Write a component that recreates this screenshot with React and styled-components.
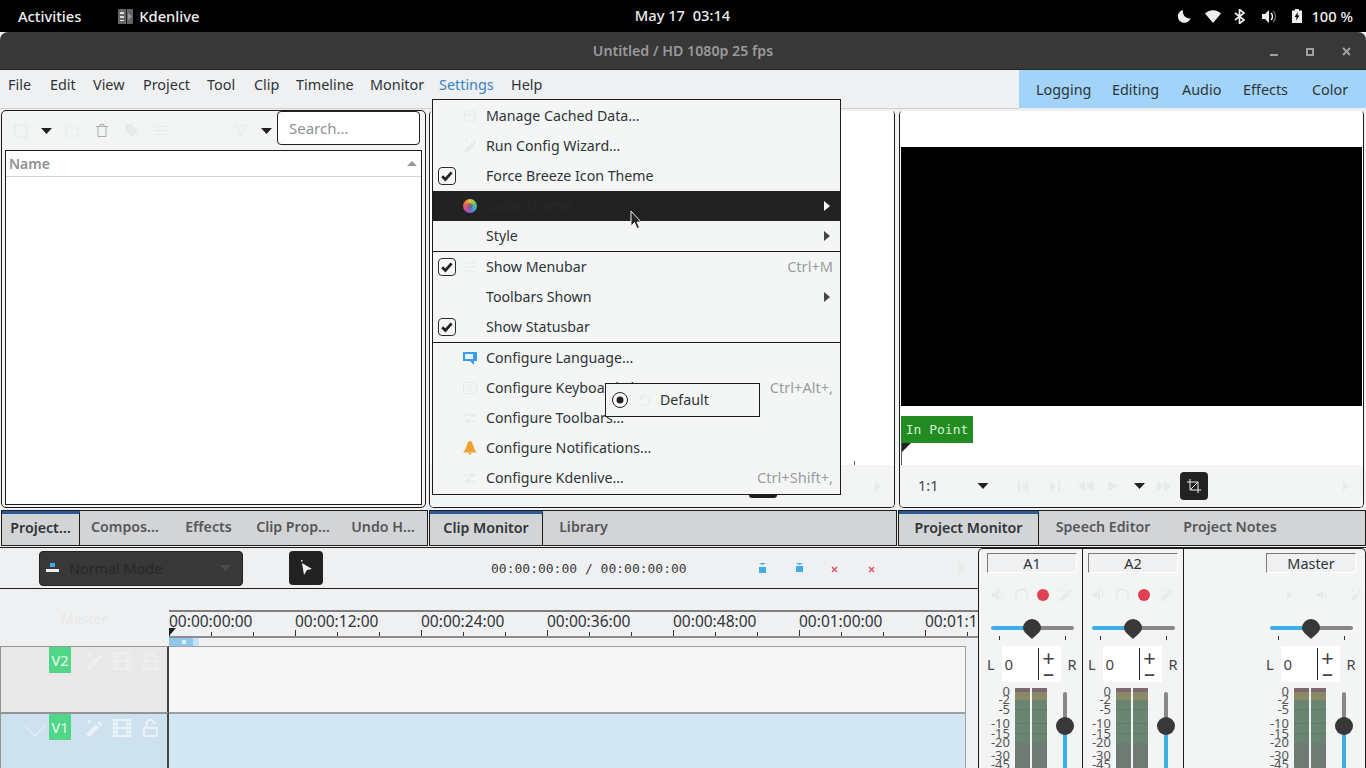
import React from "react";
import styled, { createGlobalStyle } from "styled-components";

const Global = createGlobalStyle`
  html, body { margin: 0; padding: 0; background: #eff0f1; }
  #root { width: 1366px; height: 768px; overflow: hidden; position: relative; font-family: "Noto Sans", "Open Sans", sans-serif; font-size: 14px; color: #2e3436; }
  * { box-sizing: border-box; }
`;

const Page = styled.div`display:flex;flex-direction:column;width:1366px;height:768px;position:relative;overflow:hidden;background:#eff0f1;`;

/* GNOME bar */
const TopBar = styled.div`height:32px;background:#000;color:#eee;display:flex;align-items:center;padding:0 13px 0 18px;font-size:14.7px;font-weight:500;position:relative;flex:none;`;
const TopApp = styled.div`display:flex;align-items:center;gap:6px;margin-left:37px;`;
const Clock = styled.div`position:absolute;left:0;right:0;top:0;height:32px;line-height:31px;text-align:center;padding-right:1px;`;
const Tray = styled.div`margin-left:auto;display:flex;align-items:center;`;
const TitleBar = styled.div`height:38px;background:#383838;border-radius:8px 8px 0 0;border-bottom:1px solid #242424;color:#9a9a9a;font-size:14.2px;font-weight:600;display:flex;align-items:center;justify-content:center;position:relative;flex:none;`;
const WinBtns = styled.div`position:absolute;right:15px;top:15px;display:flex;gap:28px;align-items:center;`;

/* Menu */
const MenuRow = styled.div`height:39px;display:flex;flex:none;`;
const MenuBar = styled.div`flex:1;border-bottom:1px solid #d0d1d2;display:flex;align-items:center;padding:0 0 10px 8px;height:39px;font-size:14.4px;`;
const MenuName = styled.span`width:${p => p.$w}px;flex:none;color:${p => p.$on ? "#3584c4" : "#2e3436"};`;
const Layouts = styled.div`width:347px;height:38px;background:#a2d4fa;display:flex;align-items:center;padding-left:17px;font-size:14.4px;`;
const LayoutName = styled.span`width:${p => p.$w}px;flex:none;`;

/* Docks */
const Upper = styled.div`height:437px;display:flex;flex:none;`;
const Dock = styled.div`width:${p => p.$w}px;display:flex;flex-direction:column;padding-left:${p => p.$pl || 0}px;`;
const Panel = styled.div`flex:1;margin:1px 2px 2px ${p => p.$ml || 0}px;border:1px solid #1c1c1c;border-top-color:${p => p.$top || "#1c1c1c"};border-radius:5px;background:${p => p.$bg || "#f3f5f5"};overflow:hidden;display:flex;flex-direction:column;min-height:0;`;
const TabBar = styled.div`height:36px;flex:none;background:#d3d4d6;border:1px solid #1c1c1c;display:flex;`;
const Tab = styled.div`width:${p => p.$w}px;flex:none;display:flex;align-items:center;justify-content:center;font-size:14.2px;font-weight:600;color:${p => p.$on ? "#2e3436" : "#555759"};white-space:nowrap;padding-bottom:${p => p.$on ? 5 : 3}px;${p => p.$on ? "border-top:3px solid #2a5a96;border-right:1px solid #1c1c1c;" : ""}`;

const BinTools = styled.div`height:39px;display:flex;align-items:center;padding:0 5px 0 12px;flex:none;`;
const Search = styled.div`width:143px;height:34px;margin:-6px 0 0 auto;border:1px solid #222;border-radius:4px;background:#fff;color:#8e9192;padding-left:11px;display:flex;align-items:center;font-size:15px;`;
const NameList = styled.div`flex:1;margin:0 3px 2px 3px;background:#fff;border:1px solid #1c1c1c;`;
const ListHead = styled.div`height:26px;border-bottom:1px solid #d4d4d4;display:flex;align-items:center;justify-content:space-between;padding:0 4px 0 3px;color:#8f9192;font-weight:600;`;
const Spacer = styled.div`width:${p => p.$w}px;flex:none;`;

const MonArea = styled.div`flex:1;background:#fff;display:flex;flex-direction:column;padding:36px 1px 0 1px;min-height:0;position:relative;`;
const Video = styled.div`height:259px;background:#000;flex:none;`;
const InPoint = styled.div`width:72px;height:27px;margin-top:10px;background:#228b22;color:#d8f3d8;font-family:"DejaVu Sans Mono",monospace;font-size:13px;display:flex;align-items:center;justify-content:center;flex:none;`;
const Marker = styled.svg`display:block;flex:none;`;
const MonBar = styled.div`height:42px;flex:none;display:flex;align-items:center;background:#f3f5f5;padding-left:18px;position:relative;`;
const Zoom = styled.span`width:59px;font-size:14.5px;color:#444;margin-top:-2px;`;
const Crop = styled.div`width:28px;height:28px;border-radius:4px;background:#222;display:flex;align-items:center;justify-content:center;margin-left:9px;`;
const FarArrow = styled.div`margin-left:auto;padding-right:14px;display:flex;`;
const ClipArea = styled.div`flex:1;background:#fff;display:flex;justify-content:flex-end;align-items:flex-end;padding-right:39px;`;
const ClipTick = styled.div`width:1px;height:4px;background:#666;`;
const ClipBar = styled.div`height:42px;background:#f3f5f5;flex:none;display:flex;align-items:center;justify-content:flex-end;padding-right:13px;`;

/* Lower */
const Lower = styled.div`flex:1;display:flex;min-height:0;border-top:1px solid #1c1c1c;margin-top:1px;`;
const TimelinePane = styled.div`width:978px;flex:none;display:flex;flex-direction:column;`;
const TlTools = styled.div`height:41px;flex:none;border-bottom:1px solid #1c1c1c;display:flex;align-items:center;padding-left:39px;position:relative;`;
const ModeBox = styled.div`width:204px;height:35px;flex:none;border-radius:4px;background:#383838;border:1px solid #222;display:flex;align-items:center;padding:0 11px 0 6px;color:#26282a;font-size:14.4px;gap:10px;`;
const ToolBtn = styled.div`width:34px;height:34px;flex:none;border-radius:4px;background:#222;margin-left:46px;display:flex;align-items:center;justify-content:center;`;
const Time = styled.div`margin-left:46px;padding-left:122px;flex:none;font-family:"DejaVu Sans Mono",monospace;font-size:13px;color:#3a3c3e;white-space:pre;`;
const TlIcons = styled.div`margin-left:72px;display:flex;align-items:center;gap:30px;flex:none;`;
const TlIcon = styled.svg`display:block;${p => p.$cross ? "margin-top:3px;" : ""}${p => p.$pull ? "margin-left:-2px;" : ""}`;
const RulerRow = styled.div`height:57px;flex:none;display:flex;`;
const MasterCol = styled.div`width:169px;flex:none;color:#e6e8e9;text-align:center;padding:20px 1px 0 0;`;
const Ruler = styled.div`flex:1;margin-top:21px;height:28px;border-top:2px solid #7f7f7f;border-bottom:2px solid #8d8d8d;display:flex;overflow:hidden;`;
const RulerCell = styled.div`width:126px;flex:none;font-size:15.5px;color:#2f3438;line-height:19px;white-space:nowrap;height:24px;background:
  linear-gradient(#333,#333) 0 18px/1px 6px no-repeat,
  linear-gradient(#333,#333) 42px 20px/1px 4px no-repeat,
  linear-gradient(#333,#333) 84px 20px/1px 4px no-repeat;`;
const Overlay = styled.svg`position:absolute;left:169px;display:block;`;
const Track = styled.div`height:${p => p.$h}px;flex:none;display:flex;`;
const TrackHead = styled.div`width:169px;flex:none;background:${p => p.$bg};border:1px solid #959595;border-right:2px solid #444;display:flex;align-items:flex-start;padding-left:24px;`;
const TrackTag = styled.div`width:22px;height:26px;margin-left:3px;background:#4fd687;color:#eefbf3;display:flex;align-items:center;justify-content:center;font-size:14.5px;`;
const TrackIcons = styled.div`display:flex;gap:10px;margin-left:14px;padding-top:5px;`;
const LockSlot = styled.div`margin-left:2px;`;
const TrackBody = styled.div`width:797px;flex:none;background:${p => p.$bg};border:1px solid #a0a0a0;border-left:0;`;
const ChevWrap = styled.div`padding-top:8px;width:21px;flex:none;`;

/* Mixer */
const Mixer = styled.div`flex:1;border:1px solid #1c1c1c;border-bottom:0;border-radius:5px 5px 0 0;background:#f3f5f5;display:flex;padding:0 3px;overflow:hidden;`;
const Strip = styled.div`width:101px;flex:none;padding-left:5px;${p => p.$line ? "border-right:1px solid #1c1c1c;" : ""}${p => p.$end ? "margin-left:auto;" : ""}display:flex;flex-direction:column;`;
const StripName = styled.div`width:90px;height:20px;margin-top:4px;background:#eff0f1;border:1px solid #fff;border-top-color:#777;border-left-color:#777;display:flex;align-items:center;justify-content:center;font-size:14.4px;color:#2e3436;flex:none;`;
const StripIcons = styled.div`height:26px;margin-top:9px;display:flex;align-items:center;flex:none;`;
const Pan = styled.div`position:relative;height:24px;margin-top:11px;margin-left:4px;width:83px;flex:none;`;
const PanLine = styled.div`position:absolute;top:7px;left:0;right:0;height:4px;border-radius:2px;background:linear-gradient(90deg,#3daee9 50%,#888 50%);`;
const PanKnob = styled.svg`position:absolute;left:32px;top:0;`;
const PanTick = styled.div`position:absolute;top:17px;left:${p => p.$x}px;width:1px;height:4px;background:#333;`;
const Balance = styled.div`height:36px;flex:none;margin-top:3px;display:flex;align-items:center;font-size:14.5px;color:#444;`;
const BalBox = styled.div`width:59px;height:36px;background:#fff;margin:0 7px 0 7px;display:flex;align-items:center;padding-left:3px;font-size:15px;position:relative;`;
const BalDiv = styled.div`position:absolute;left:36px;top:2px;bottom:2px;width:1px;background:#222;`;
const BalSign = styled.div`position:absolute;left:35px;width:24px;text-align:center;top:${p => p.$t}px;font-size:22px;line-height:18px;color:#444;`;
const MeterRow = styled.div`flex:1;display:flex;margin-top:6px;position:relative;min-height:80px;`;
const Scale = styled.div`width:23px;flex:none;position:relative;`;
const ScaleNum = styled.div`position:absolute;right:0;top:${p => p.$t}px;font-size:13px;line-height:13px;color:#555;`;
const Bar = styled.div`width:15px;margin-left:${p => p.$ml}px;flex:none;background:linear-gradient(#7d6a70 0 4px,#8a8a68 4px 12px,#6b8573 12px 21px,#5f7a68 21px 22px,#6b8573 22px 35px,#5f7a68 35px 36px,#6b8573 36px 45px,#5f7a68 45px 46px,#6b8573 46px 55px,#6f7a75 55px);`;
const Fader = styled.div`position:relative;width:18px;margin-left:9px;flex:none;`;
const FaderLine = styled.div`position:absolute;left:7px;width:4px;top:4px;bottom:0;background:linear-gradient(#888 0 38px,#3daee9 38px);border-radius:2px 2px 0 0;`;
const FaderKnob = styled.div`position:absolute;left:0;top:29px;width:18px;height:18px;border-radius:50%;background:#383838;`;

/* Popup */
const Popup = styled.div`position:absolute;left:432px;top:99px;width:409px;height:396px;background:#f4f6f6;border:1px solid #1c1c1c;padding:1px 0;display:flex;flex-direction:column;z-index:5;`;
const Item = styled.div`height:30px;flex:none;display:flex;align-items:center;padding:0 7px 0 0;background:${p => p.$hot ? "#222" : "transparent"};color:${p => p.$hot ? "#26282b" : "#2e3436"};`;
const CheckCol = styled.div`width:28px;flex:none;padding-left:5px;display:flex;align-items:center;`;
const IconCol = styled.div`width:25px;flex:none;display:flex;justify-content:center;padding-right:7px;`;
const ItemText = styled.span`flex:1;white-space:nowrap;font-size:14.2px;margin-top:-2px;`;
const Short = styled.span`color:#9b9d9e;white-space:nowrap;font-size:14.6px;margin-top:-2px;`;
const Sep = styled.div`height:1px;background:#1c1c1c;flex:none;`;
const SubMenu = styled.div`position:absolute;left:605px;top:383px;width:155px;height:34px;background:#f4f6f6;border:1px solid #1c1c1c;display:flex;align-items:center;padding-left:5px;z-index:6;font-size:14.2px;`;
const SubLabel = styled.span`margin-top:-2px;`;
const Pointer = styled.svg`position:absolute;left:630px;top:210px;z-index:7;`;
const Nub = styled.div`position:absolute;left:749px;top:495px;width:28px;height:3px;background:#1e1e1e;border-radius:0 0 4px 4px;`;
const ColorWheel = styled.div`width:14px;height:14px;border-radius:50%;background:radial-gradient(circle,#7a6a80 0 2.5px,transparent 3px),conic-gradient(#e8c040,#70c060,#40a8d0,#8060c8,#e04890,#e8703a,#e8c040);`;
const ModeCaret = styled.span`margin-left:auto;`;

const F = "#e8eaea";
const Caret = ({ c = "#222", w = 11 }) => <svg width={w} height="6" viewBox="0 0 11 6" style={{ display: "block" }}><path d="M0 0h11L5.500 6z" fill={c} /></svg>;
const Right = ({ c = "#444" }) => <svg width="6" height="10" viewBox="0 0 6 10"><path d="M0 0l6 5-6 5z" fill={c} /></svg>;
const Check = () => <svg width="18" height="18" viewBox="0 0 18 18"><rect x=".5" y=".5" width="17" height="17" rx="3.500" fill="#f6f7f7" stroke="#2a2a2a" /><path d="M4.200 9.200l3.200 3.200 6.200-7" fill="none" stroke="#222" strokeWidth="2.800" /></svg>;
const Db = () => <svg width="14" height="14" viewBox="0 0 14 14" fill="none" stroke={F}><rect x="1.500" y="1.500" width="11" height="11" rx="3" /><path d="M1.500 6h11" /></svg>;
const Wand = ({ c = F, s = 14 }) => <svg width={s} height={s} viewBox="0 0 14 14"><path d="M1 11.500L8.500 4l2.500 2.500L3.500 14z M9.500 3l1.500-1.500L13.500 4 12 5.500z M3.500 0l.6 1.400L5.500 2l-1.400.6L3.500 4l-.6-1.400L1.500 2l1.400-.6z" fill={c} /></svg>;
const Sliders = () => <svg width="14" height="14" viewBox="0 0 14 14" stroke={F} fill="none"><path d="M1 4h12M1 10h12" /><circle cx="9" cy="4" r="1.500" /><circle cx="5" cy="10" r="1.500" /></svg>;
const Bars = () => <svg width="14" height="14" viewBox="0 0 14 14" stroke={F}><path d="M1 2l2 2 3-3M1 7h12M1 11h12M7 3h6" fill="none" /></svg>;
const Keys = () => <svg width="14" height="12" viewBox="0 0 14 12"><rect x=".5" y=".5" width="13" height="11" rx="1" fill="none" stroke={F} /><path d="M2 3h10M2 6h10M4 9h6" stroke={F} strokeDasharray="1 1" /></svg>;
const Speech = () => <svg width="14" height="13" viewBox="0 0 14 13"><path d="M0 0h14v9h-3v4l-4-4H0z" fill="#3a9cf0" /><rect x="2" y="2" width="8" height="5" fill="#e8f4fd" /></svg>;
const Bell = () => <svg width="14" height="14" viewBox="0 0 14 14"><path d="M7 0c1 0 2 .7 2.200 2C11 4 10.500 9 14 11.500H0C3.500 9 3 4 4.800 2 5 .7 6 0 7 0z" fill="#f0a030" /><path d="M5.500 12h3L7 14z" fill="#c88a3a" /></svg>;
const Film = ({ c = F }) => <svg width="18" height="18" viewBox="0 0 18 18"><path fillRule="evenodd" fill={c} d="M0 0h18v18H0z M1.500 2v2h2V2z M1.500 6v2h2V6z M1.500 10v2h2v-2z M1.500 14v2h2v-2z M14.500 2v2h2V2z M14.500 6v2h2V6z M14.500 10v2h2v-2z M14.500 14v2h2v-2z M5 2v6h8V2z M5 10v6h8v-6z" /></svg>;
const Lock = ({ c = F }) => <svg width="15" height="18" viewBox="0 0 15 18" fill="none" stroke={c} strokeWidth="1.800"><rect x="1" y="9" width="13" height="8" /><path d="M3.500 9V5a4 4 0 0 1 8 0" /></svg>;
const Chev = ({ c = F }) => <svg width="20" height="11" viewBox="0 0 20 11" fill="none" stroke={c}><path d="M0 0l10 10L20 0" /></svg>;
const Spk = ({ c = F }) => <svg width="12" height="12" viewBox="0 0 12 12"><path d="M0 4h3l4-4v12l-4-4H0z M9 2c2 2 2 6 0 8" fill={c} /></svg>;
const Phones = () => <svg width="13" height="12" viewBox="0 0 13 12" fill="none" stroke={F} strokeWidth="1.500"><path d="M1 11V6a5.500 5.500 0 0 1 11 0v5" /></svg>;
const Dot = () => <svg width="12" height="12" viewBox="0 0 12 12"><circle cx="6" cy="6" r="6" fill="#e04050" /></svg>;
const Cross = ({ pull }) => <TlIcon $cross $pull={pull} width="7" height="7" viewBox="0 0 7 7" stroke="#e05060" strokeWidth="1.400"><path d="M1 1l5 5M6 1l-5 5" /></TlIcon>;

const MENUS = [["File", 42], ["Edit", 43], ["View", 50], ["Project", 64], ["Tool", 47], ["Clip", 42], ["Timeline", 74], ["Monitor", 69], ["Settings", 72], ["Help", 40]];
const LAYOUTS = [["Logging", 76], ["Editing", 70], ["Audio", 61], ["Effects", 69], ["Color", 40]];
const RULER = ["00:00:00:00", "00:00:12:00", "00:00:24:00", "00:00:36:00", "00:00:48:00", "00:01:00:00", "00:01:12:00"];
const SCALE = [["0", -3], ["-2", 5], ["-5", 15], ["-10", 29], ["-15", 39], ["-20", 48], ["-30", 61], ["-45", 70]];

const MixStrip = ({ name, line, end, master }) => (
  <Strip $line={line} $end={end}>
    <StripName>{name}</StripName>
    <StripIcons>
      {master ? <>
        <Spacer $w={21} /><Right c={F} /><Spacer $w={25} /><Spk /><Spacer $w={22} /><Wand />
      </> : <>
        <Spacer $w={5} /><Spk /><Spacer $w={11} /><Phones /><Spacer $w={9} /><Dot /><Spacer $w={9} /><Wand />
      </>}
    </StripIcons>
    <Pan>
      <PanLine />
      <PanKnob width="18" height="20" viewBox="0 0 18 20"><path d="M9 0a9 9 0 0 1 9 9c0 4-5 7-9 11C5 16 0 13 0 9a9 9 0 0 1 9-9z" fill="#383838" /></PanKnob>
      <PanTick $x={8} /><PanTick $x={74} />
    </Pan>
    <Balance>
      <span>L</span>
      <BalBox>0<BalDiv /><BalSign $t={2}>+</BalSign><BalSign $t={17}>–</BalSign></BalBox>
      <span>R</span>
    </Balance>
    <MeterRow>
      <Scale>{SCALE.map(([t, y]) => <ScaleNum key={t} $t={y}>{t}</ScaleNum>)}</Scale>
      <Bar $ml={5} /><Bar $ml={2} />
      <Fader><FaderLine /><FaderKnob /></Fader>
    </MeterRow>
  </Strip>
);

const MenuItem = ({ check, icon, text, short, sub, hot }) => (
  <Item $hot={hot}>
    <CheckCol>{check && <Check />}</CheckCol>
    <IconCol>{icon}</IconCol>
    <ItemText>{text}</ItemText>
    {short && <Short>{short}</Short>}
    {sub && <Right c={hot ? "#fff" : "#444"} />}
    {sub && <Spacer $w={3} />}
  </Item>
);

export default function App() {
  return (
    <Page>
      <Global />
      <TopBar>
        <span>Activities</span>
        <TopApp>
          <svg width="15" height="15" viewBox="0 0 15 15"><rect width="15" height="15" rx="1" fill="#666" /><path d="M2 3h4v2H2zM2 7h4v2H2zM2 11h4v1H2z" fill="#ddd" /><path d="M8 0h1v15H8z" fill="#222" /><path d="M10 4l4 3.500-4 3.500z" fill="#999" /></svg>
          <span>Kdenlive</span>
        </TopApp>
        <Clock>May 17&nbsp;&nbsp;03:14</Clock>
        <Tray>
          <svg width="13" height="14" viewBox="0 0 13 14"><path d="M5 1a6.500 6.500 0 1 0 7.500 8.500A7 7 0 0 1 5 1z" fill="#eee" /></svg>
          <Spacer $w={14} />
          <svg width="16" height="13" viewBox="0 0 16 13"><path d="M0 3.500C4.500-1 11.500-1 16 3.500L8 13z" fill="#eee" /></svg>
          <Spacer $w={13} />
          <svg width="12" height="15" viewBox="0 0 12 15" fill="none" stroke="#eee" strokeWidth="1.700"><path d="M1 4l9 7-4.500 3.500v-14L10 4l-9 7" /></svg>
          <Spacer $w={16} />
          <svg width="15" height="13" viewBox="0 0 15 13"><path d="M0 4h3l4-4v13l-4-4H0z" fill="#eee" /><path d="M9 3c2 2 2 5 0 7" fill="none" stroke="#eee" strokeWidth="1.500" /><path d="M11 1c3.500 3 3.500 8 0 11" fill="none" stroke="#777" strokeWidth="1.200" /></svg>
          <Spacer $w={15} />
          <svg width="10" height="14" viewBox="0 0 10 14"><path d="M3 0h4v1.500h3V14H0V1.500h3z" fill="#eee" /><path d="M6 3L2.500 8h2L4 11.500 7.500 6.500h-2z" fill="#000" /></svg>
          <Spacer $w={9} />
          <span>100 %</span>
        </Tray>
      </TopBar>
      <TitleBar>
        Untitled / HD 1080p 25 fps
        <WinBtns>
          <svg width="8" height="8" viewBox="0 0 8 8"><path d="M0 6h8v2H0z" fill="#a0a0a0" /></svg>
          <svg width="8" height="8" viewBox="0 0 8 8" fill="none" stroke="#a0a0a0" strokeWidth="2"><rect x="1" y="1" width="6" height="6" /></svg>
          <svg width="9" height="9" viewBox="0 0 9 9" stroke="#a0a0a0" strokeWidth="2"><path d="M1 1l7 7M8 1l-7 7" /></svg>
        </WinBtns>
      </TitleBar>
      <MenuRow>
        <MenuBar>
          {MENUS.map(([m, w]) => <MenuName key={m} $w={w} $on={m === "Settings"}>{m}</MenuName>)}
        </MenuBar>
        <Layouts>
          {LAYOUTS.map(([m, w]) => <LayoutName key={m} $w={w}>{m}</LayoutName>)}
        </Layouts>
      </MenuRow>
      <Upper>
        <Dock $w={428} $pl={1}>
          <Panel>
            <BinTools>
              <svg width="14" height="14" viewBox="0 0 14 14" fill="none" stroke={F}><rect x="1" y="1" width="12" height="12" /></svg>
              <Spacer $w={13} /><Caret /><Spacer $w={13} />
              <svg width="14" height="14" viewBox="0 0 14 14" fill="none" stroke={F}><path d="M1 12V2h5l1 2h6v8z" /></svg>
              <Spacer $w={17} />
              <svg width="12" height="13" viewBox="0 0 12 13" fill="none" stroke="#aaa"><path d="M0 2.500h12M2 2.500v10h8v-10M4 2.500V.5h4v2" /></svg>
              <Spacer $w={17} />
              <svg width="13" height="13" viewBox="0 0 13 13"><path d="M0 0h6l7 7-6 6-7-7z" fill={F} /></svg>
              <Spacer $w={17} />
              <svg width="12" height="11" viewBox="0 0 12 11" stroke={F}><path d="M0 1.500h12M0 5.500h12M0 9.500h12" /></svg>
              <Spacer $w={68} />
              <svg width="12" height="12" viewBox="0 0 12 12" fill="none" stroke={F}><path d="M0 0h12L7 7v5H5V7z" /></svg>
              <Spacer $w={14} /><Caret />
              <Search>Search…</Search>
            </BinTools>
            <NameList>
              <ListHead>Name<svg width="10" height="5" viewBox="0 0 10 5"><path d="M0 5h10L5 0z" fill="#999" /></svg></ListHead>
            </NameList>
          </Panel>
          <TabBar>
            <Tab $w={78} $on>Project…</Tab><Tab $w={90}>Compos…</Tab><Tab $w={77}>Effects</Tab><Tab $w={92}>Clip Prop…</Tab><Tab $w={88}>Undo H…</Tab>
          </TabBar>
        </Dock>
        <Dock $w={469} $pl={1}>
          <Panel $bg="#fff" $top="#f0f0f0">
            <ClipArea><ClipTick /></ClipArea>
            <ClipBar><Right c={F} /></ClipBar>
          </Panel>
          <TabBar>
            <Tab $w={113} $on>Clip Monitor</Tab><Tab $w={81}>Library</Tab>
          </TabBar>
        </Dock>
        <Dock $w={469} $pl={1}>
          <Panel $ml={1} $top="#f0f0f0">
            <MonArea>
              <Video />
              <InPoint>In Point</InPoint>
              <Marker width="10" height="22" viewBox="0 0 10 22"><path d="M0 0h10L0 10z" fill="#222" /><path d="M.5 0v22" stroke="#555" /></Marker>
            </MonArea>
            <MonBar>
              <Zoom>1:1</Zoom>
              <Caret w={12} />
              <Spacer $w={27} />
              <svg width="110" height="14" viewBox="0 0 110 14"><g fill={F}><path d="M2 2h2v10H2zM6 7l6-5v10z M34 2l6 5-6 5z M42 2h2v10h-2z M62 7l7-5v10z M70 7l7-5v10z M92 2l12 5-12 5z" /></g></svg>
              <Spacer $w={8} />
              <Caret />
              <Spacer $w={12} />
              <svg width="14" height="14" viewBox="0 0 14 14"><path d="M0 2l7 5-7 5z M7 2l7 5-7 5z" fill={F} /></svg>
              <Crop><svg width="14" height="14" viewBox="0 0 14 14" fill="none" stroke="#eee"><path d="M3 0v11h11M0 3h11v11M3 11L11 3" /></svg></Crop>
              <FarArrow><Right c={F} /></FarArrow>
            </MonBar>
          </Panel>
          <TabBar>
            <Tab $w={140} $on>Project Monitor</Tab><Tab $w={128}>Speech Editor</Tab><Tab $w={126}>Project Notes</Tab>
          </TabBar>
        </Dock>
      </Upper>
      <Lower>
        <TimelinePane>
          <TlTools>
            <ModeBox>
              <svg width="13" height="11" viewBox="0 0 13 11"><path d="M4 0h5v4H4z" fill="#3daee9" /><path d="M0 6h13v3H0z" fill="#eee" /></svg>
              <span>Normal Mode</span>
              <ModeCaret><Caret c="#4a4c4e" /></ModeCaret>
            </ModeBox>
            <ToolBtn><svg width="14" height="16" viewBox="0 0 14 16"><path d="M3 3l10 6-5 1-3 5z" fill="#eee" /><rect x="2" y="0" width="1.500" height="1.500" fill="#eee" /></svg></ToolBtn>
            <Time>00:00:00:00 / 00:00:00:00</Time>
            <TlIcons>
              <TlIcon width="7" height="10" viewBox="0 0 7 10"><path d="M0 0h7L3.500 2z" fill="#3daee9" /><path d="M0 4h7v6H0z" fill="#3daee9" /></TlIcon>
              <TlIcon width="7" height="10" viewBox="0 0 7 10"><path d="M0 0h7L3.500 2z" fill="#3daee9" /><path d="M0 3h7v6H0z" fill="#3daee9" /></TlIcon>
              <Cross pull />
              <Cross />
              <Spacer $w={24} />
              <Right c={F} />
            </TlIcons>
          </TlTools>
          <RulerRow>
            <MasterCol>Master</MasterCol>
            <Ruler>{RULER.map(t => <RulerCell key={t}>{t}</RulerCell>)}</Ruler>
          </RulerRow>
          <Track $h={67}>
            <TrackHead $bg="#e9e9e9">
              <ChevWrap><Chev c="#f0f0f0" /></ChevWrap>
              <TrackTag>V2</TrackTag>
              <TrackIcons><Wand s={18} c="#efefef" /><Film c="#efefef" /><LockSlot><Lock c="#efefef" /></LockSlot></TrackIcons>
            </TrackHead>
            <TrackBody $bg="#f6f6f6" />
          </Track>
          <Track $h={60}>
            <TrackHead $bg="#cde1ef">
              <ChevWrap><Chev c="#ecf3f8" /></ChevWrap>
              <TrackTag>V1</TrackTag>
              <TrackIcons><Wand s={18} c="#ecf3f8" /><Film c="#ecf3f8" /><LockSlot><Lock c="#ecf3f8" /></LockSlot></TrackIcons>
            </TrackHead>
            <TrackBody $bg="#d2e6f4" />
          </Track>
        </TimelinePane>
        <Mixer>
          <MixStrip name="A1" line />
          <MixStrip name="A2" line />
          <MixStrip name="Master" end master />
        </Mixer>
      </Lower>
      <Overlay style={{ top: 628 }} width="30" height="18" viewBox="0 0 30 18">
        <path d="M0 0h7L0 8z" fill="#222" />
        <rect y="10" width="30" height="8" fill="#8fc8ea" />
        <rect x="13" y="12" width="4" height="4" fill="#d8eefa" />
        <rect x="24" y="10" width="6" height="8" fill="#c3e2f5" />
      </Overlay>
      <Nub />
      <Popup>
        <MenuItem icon={<Db />} text="Manage Cached Data…" />
        <MenuItem icon={<Wand />} text="Run Config Wizard…" />
        <MenuItem check text="Force Breeze Icon Theme" />
        <MenuItem hot icon={<ColorWheel />} text="Color Theme" sub />
        <MenuItem text="Style" sub />
        <Sep />
        <MenuItem check icon={<Bars />} text="Show Menubar" short="Ctrl+M" />
        <MenuItem text="Toolbars Shown" sub />
        <MenuItem check text="Show Statusbar" />
        <Sep />
        <MenuItem icon={<Speech />} text="Configure Language..." />
        <MenuItem icon={<Keys />} text="Configure Keyboard Shortcuts..." short="Ctrl+Alt+," />
        <MenuItem icon={<Sliders />} text="Configure Toolbars..." />
        <MenuItem icon={<Bell />} text="Configure Notifications..." />
        <MenuItem icon={<Sliders />} text="Configure Kdenlive..." short="Ctrl+Shift+," />
      </Popup>
      <SubMenu>
        <svg width="18" height="18" viewBox="0 0 18 18"><circle cx="9" cy="9" r="7.500" fill="#f6f7f7" stroke="#222" /><circle cx="9" cy="9" r="3.500" fill="#222" /></svg>
        <Spacer $w={8} />
        <svg width="14" height="14" viewBox="0 0 14 14" fill="none" stroke={F}><path d="M3 3v3h3M3 6a5 5 0 1 1 1 5" /></svg>
        <Spacer $w={9} />
        <SubLabel>Default</SubLabel>
      </SubMenu>
      <Pointer width="12" height="20" viewBox="0 0 12 20"><path d="M1 1v15l3.500-3.500 2.500 6 2.500-1-2.500-5.500H11z" fill="#222" stroke="#eee" /></Pointer>
    </Page>
  );
}
